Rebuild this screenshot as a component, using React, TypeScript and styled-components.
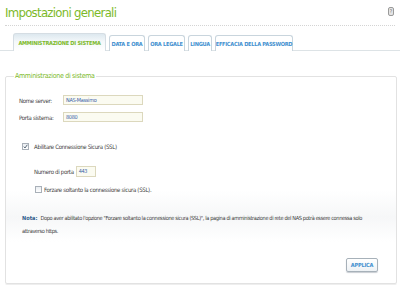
import React from "react";
import styled, { createGlobalStyle, css } from "styled-components";

const GlobalStyle = createGlobalStyle`
  html, body {
    margin: 0;
    padding: 0;
    background: #ffffff;
  }
  * {
    box-sizing: border-box;
  }
`;

const narrow = `"DejaVu Sans Condensed", "Liberation Sans", Arial, sans-serif`;

const Page = styled.div`
  width: 400px;
  height: 300px;
  overflow: hidden;
  background: #fff;
  font-family: ${narrow};
  display: flex;
  flex-direction: column;
`;

const Header = styled.div`
  display: flex;
  justify-content: space-between;
  align-items: flex-start;
  margin: 0 5px;
  padding-top: 4px;
  height: 26px;
  border-bottom: 1px dotted #d4d4d4;
`;

const Title = styled.h1`
  margin: 0;
  font-size: 13px;
  font-weight: normal;
  letter-spacing: -0.7px;
  color: #7cb929;
  line-height: 18px;
`;

const Help = styled.span`
  margin-top: 3px;
  margin-right: 1px;
  width: 6px;
  height: 9px;
  border: 1px solid #9a9a9a;
  border-radius: 2px;
  background: #e4e4e4;
  color: #666;
  font-size: 5px;
  line-height: 7px;
  text-align: center;
`;

const Tabs = styled.div`
  display: flex;
  align-items: flex-end;
  gap: 3px;
  margin-top: 7px;
  padding-left: 13px;
  height: 18px;
  border-bottom: 1px solid #dde3e6;
`;

const Tab = styled.div<{ $active?: boolean; $w: number }>`
  width: ${(p) => p.$w}px;
  height: ${(p) => (p.$active ? 18 : 16)}px;
  margin-bottom: -1px;
  display: flex;
  align-items: center;
  justify-content: center;
  border: 1px solid #c9d5dd;
  border-bottom: none;
  border-radius: 3px 3px 0 0;
  font-size: 5.6px;
  font-weight: bold;
  letter-spacing: -0.25px;
  white-space: nowrap;
  color: #3f90cf;
  background: #fff;
  ${(p) =>
    p.$active &&
    css`
      color: #7cb929;
      border-color: #d5dde3;
      background: linear-gradient(#dde8ef 0%, #f4f8fa 45%, #ffffff 100%);
    `}
`;

const Fieldset = styled.fieldset`
  margin: 21px 3px 0 5px;
  padding: 0;
  height: 212px;
  border: 1px solid #e2e2e2;
  border-radius: 2px;
  background: linear-gradient(#ffffff 0%, #ffffff 55%, #f6f7f8 68%, #ffffff 80%, #ffffff 100%);
  display: flex;
  flex-direction: column;
  box-shadow: 0 1px 0 #eeeeee;
`;

const Legend = styled.legend`
  margin-left: 8px;
  padding: 0 1px;
  font-size: 7px;
  color: #7cb929;
  letter-spacing: -0.3px;
`;

const Body = styled.div`
  padding: 15px 0 0 13px;
  display: flex;
  flex-direction: column;
  font-size: 6px;
  letter-spacing: -0.3px;
  color: #3d3d3d;
`;

const FieldRow = styled.div`
  display: flex;
  align-items: center;
  height: 10px;
  margin-bottom: 7px;
`;

const Label = styled.span`
  width: 44px;
`;

const Input = styled.div<{ $w: number; $h?: number }>`
  width: ${(p) => p.$w}px;
  height: ${(p) => p.$h ?? 10}px;
  border: 1px solid #dcd8bd;
  background: #fbfbf1;
  color: #3a62a8;
  font-size: 5.5px;
  line-height: ${(p) => (p.$h ?? 10) - 2}px;
  padding-left: 2px;
`;

const CheckRow = styled.div<{ $indent: number; $top: number; $gap: number }>`
  display: flex;
  align-items: center;
  gap: ${(p) => p.$gap}px;
  margin-left: ${(p) => p.$indent}px;
  margin-top: ${(p) => p.$top}px;
  height: 11px;
`;

const Box = styled.span`
  width: 7px;
  height: 7px;
  border: 1px solid #a9b0b8;
  background: linear-gradient(#e9edf1, #ffffff);
  display: flex;
  align-items: center;
  justify-content: center;
`;

const PortRow = styled.div`
  display: flex;
  align-items: center;
  gap: 2px;
  margin: 14px 0 0 15px;
  height: 11px;
`;

const Note = styled.div`
  margin: 17px 0 0 3px;
  display: flex;
  flex-direction: column;
  font-size: 5.6px;
  line-height: 13px;
  letter-spacing: -0.36px;
  color: #3d3d3d;
`;

const NoteLine = styled.div`
  display: flex;
  white-space: nowrap;
`;

const NoteTag = styled.b`
  color: #2f5d8c;
  letter-spacing: 0;
  margin-right: 3px;
`;

const Footer = styled.div`
  display: flex;
  justify-content: flex-end;
  padding-right: 18px;
  margin-top: 20px;
`;

const Button = styled.button`
  width: 32px;
  height: 14px;
  padding: 0;
  border: 1px solid #a7b1b9;
  border-radius: 2px;
  background: linear-gradient(#ffffff, #eef2f5);
  color: #3f90cf;
  font-family: ${narrow};
  font-size: 5.6px;
  font-weight: bold;
  letter-spacing: -0.2px;
  box-shadow: 0 1px 1px #c8cdd2;
`;

const Check = () => (
  <svg width="5" height="5" viewBox="0 0 5 5">
    <path d="M0.8 2.6 L2 4 L4.3 0.8" fill="none" stroke="#4a5a6a" strokeWidth="0.9" />
  </svg>
);

const tabs = [
  { label: "AMMINISTRAZIONE DI SISTEMA", w: 93, active: true },
  { label: "DATA E ORA", w: 36 },
  { label: "ORA LEGALE", w: 37 },
  { label: "LINGUA", w: 24 },
  { label: "EFFICACIA DELLA PASSWORD", w: 78 },
];

export default function App() {
  return (
    <Page>
      <GlobalStyle />
      <Header>
        <Title>Impostazioni generali</Title>
        <Help>?</Help>
      </Header>
      <Tabs>
        {tabs.map((t) => (
          <Tab key={t.label} $w={t.w} $active={t.active}>
            {t.label}
          </Tab>
        ))}
      </Tabs>
      <Fieldset>
        <Legend>Amministrazione di sistema</Legend>
        <Body>
          <FieldRow>
            <Label>Nome server:</Label>
            <Input $w={80}>NAS-Massimo</Input>
          </FieldRow>
          <FieldRow>
            <Label>Porta sistema:</Label>
            <Input $w={80}>8080</Input>
          </FieldRow>
          <CheckRow $indent={3} $top={12} $gap={5}>
            <Box>
              <Check />
            </Box>
            Abilitare Connessione Sicura (SSL)
          </CheckRow>
          <PortRow>
            Numero di porta
            <Input $w={20} $h={11}>443</Input>
          </PortRow>
          <CheckRow $indent={16} $top={7} $gap={2}>
            <Box />
            Forzare soltanto la connessione sicura (SSL).
          </CheckRow>
          <Note>
            <NoteLine>
              <NoteTag>Nota:</NoteTag>
              <span>
                Dopo aver abilitato l'opzione "Forzare soltanto la connessione sicura (SSL)", la pagina di
                amministrazione di rete del NAS potrà essere connessa solo
              </span>
            </NoteLine>
            <NoteLine>attraverso https.</NoteLine>
          </Note>
        </Body>
        <Footer>
          <Button>APPLICA</Button>
        </Footer>
      </Fieldset>
    </Page>
  );
}
